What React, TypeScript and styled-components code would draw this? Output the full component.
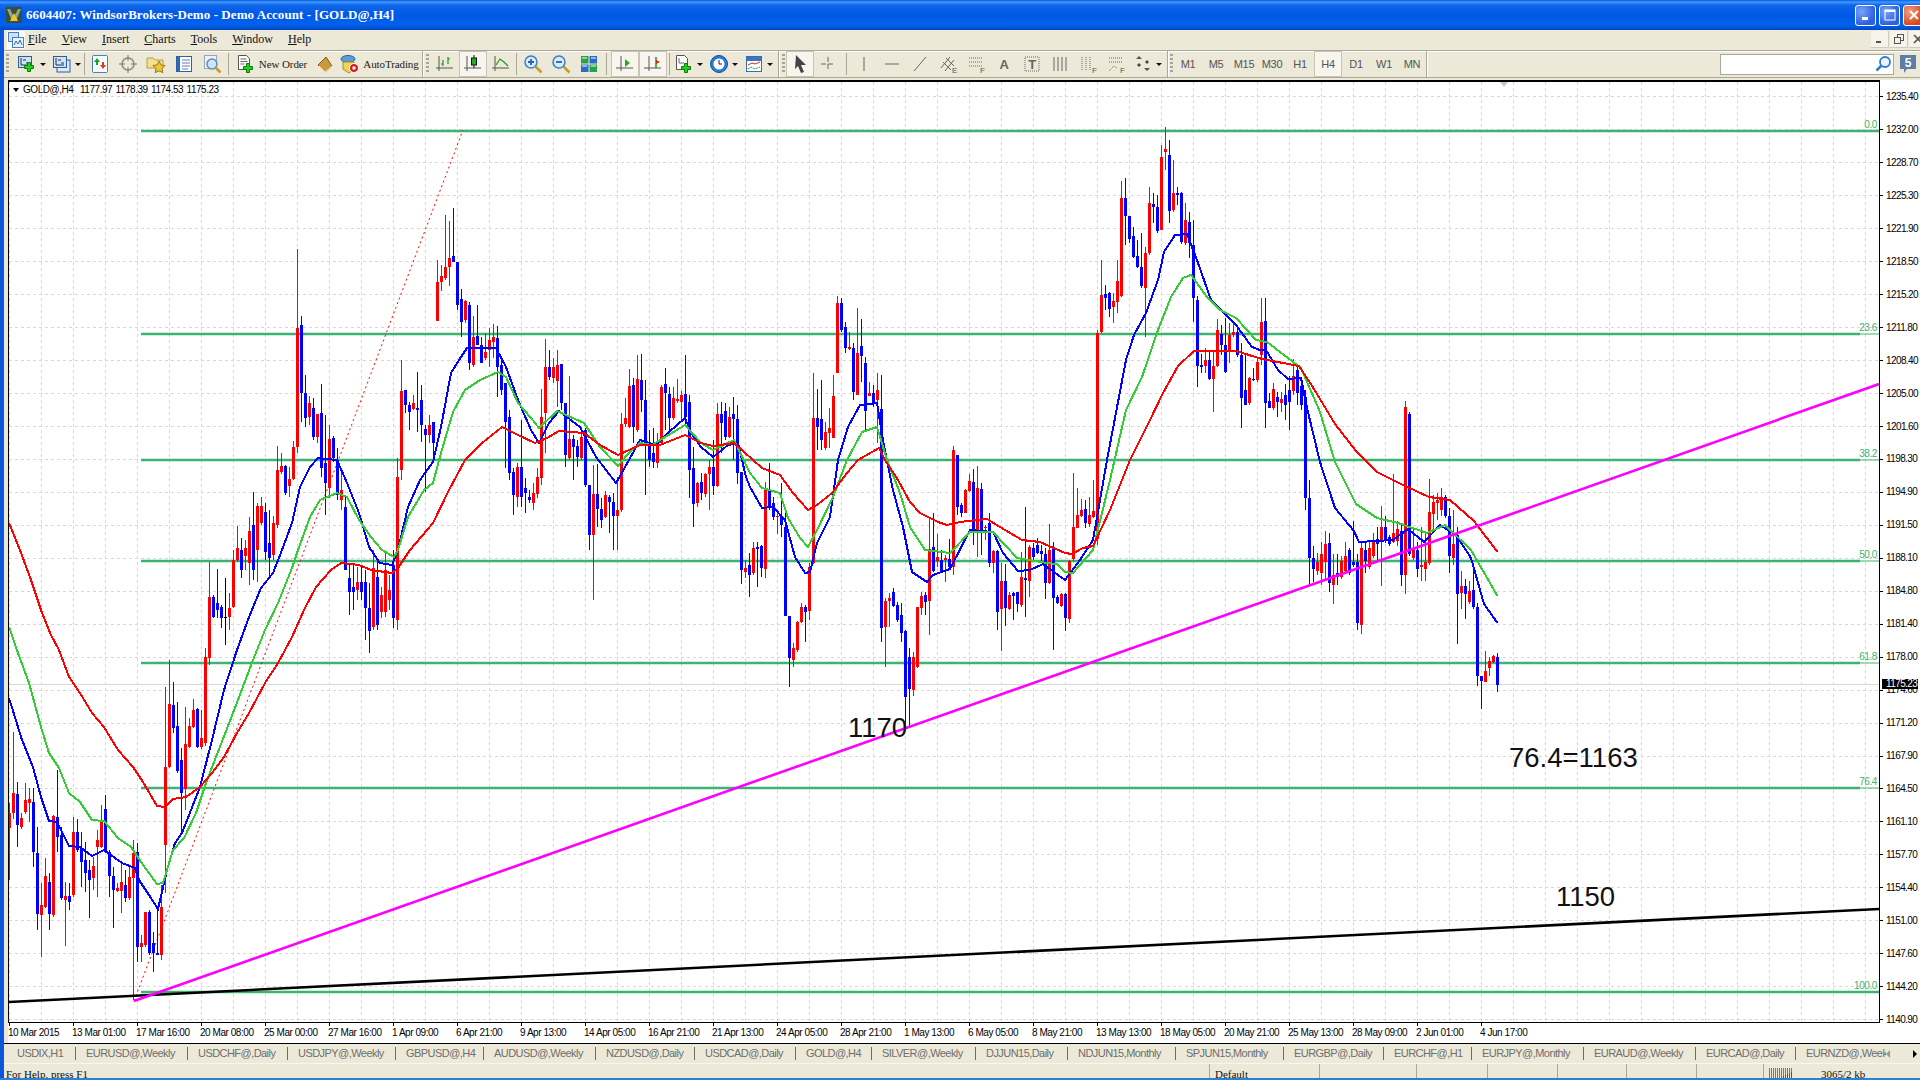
import React from "react";
import styled, { createGlobalStyle } from "styled-components";

const GlobalStyle = createGlobalStyle`
	html, body { margin: 0; height: 100%; overflow: hidden; background: #ece9d8; }
	#root { height: 100%; }
	* { box-sizing: border-box; }
`;

// all chart data is in page pixels, the svg viewBox starts where the chart starts
const BX0 = 9.5;
const BARS: number[][] = [
	// x, high, bodyTop, bodyBottom, low, 0 red / 1 blue / 2 black
	[9.5,803,813,828,880,0],[13.5,732,793,813,819,0],[17.5,782,794,825,847,1],[21.5,813,818,827,829,0],[25.5,783,800,812,814,0],[29.5,788,799,803,822,0],
	[33.5,788,802,852,867,1],[37.5,827,853,914,930,1],[41.5,883,905,915,957,0],[45.5,858,876,907,908,0],[49.5,873,882,914,930,1],[53.5,815,816,915,917,0],
	[57.5,770,817,837,852,1],[61.5,827,835,898,900,1],[65.5,882,896,900,946,0],[69.5,883,896,902,910,1],[73.5,817,832,895,897,0],[77.5,819,832,850,852,1],
	[81.5,832,848,862,887,1],[85.5,842,860,873,892,1],[89.5,860,870,880,918,1],[93.5,857,866,878,890,0],[97.5,830,840,847,897,0],[101.5,805,820,847,848,0],
	[105.5,795,809,852,853,1],[109.5,850,852,876,897,1],[113.5,867,876,890,928,1],[117.5,883,888,891,892,0],[121.5,863,882,891,913,0],[125.5,870,885,898,902,1],
	[129.5,867,877,898,900,0],[133.5,840,853,878,1000,0],[137.5,843,852,947,962,1],[141.5,935,943,947,962,0],[145.5,912,912,945,947,0],[149.5,910,912,953,955,1],
	[153.5,932,943,953,972,1],[157.5,907,953,955,955,1],[161.5,885,907,955,960,0],[165.5,687,767,845,893,0],[169.5,660,704,767,768,0],[173.5,682,705,728,733,1],
	[177.5,702,726,771,773,1],[181.5,748,760,793,833,1],[185.5,707,744,789,810,0],[189.5,718,726,747,748,0],[193.5,699,710,727,728,0],[197.5,708,709,747,748,1],
	[201.5,710,738,747,749,0],[205.5,648,657,743,746,0],[209.5,562,597,658,665,0],[213.5,595,597,617,618,1],[217.5,569,603,610,618,1],[221.5,605,607,618,628,1],
	[225.5,578,617,618,645,2],[229.5,593,608,617,630,0],[233.5,550,560,607,608,0],[237.5,526,548,560,562,0],[241.5,538,550,570,578,1],[245.5,540,548,556,570,0],
	[249.5,517,531,563,585,0],[253.5,492,525,570,580,1],[257.5,503,506,550,582,0],[261.5,497,506,523,525,0],[265.5,503,512,552,560,1],[269.5,510,543,558,578,1],
	[273.5,516,523,555,560,0],[277.5,446,470,525,528,0],[281.5,453,466,472,474,0],[285.5,465,466,493,495,1],[289.5,467,479,486,497,0],[293.5,441,447,479,480,0],
	[297.5,249,328,447,453,0],[301.5,316,325,393,422,1],[305.5,375,393,418,427,1],[309.5,396,403,417,425,0],[313.5,398,408,437,440,1],[317.5,414,414,437,443,0],
	[321.5,384,413,468,477,1],[325.5,415,463,483,515,1],[329.5,425,439,488,498,0],[333.5,436,438,458,462,1],[337.5,448,460,495,500,1],[341.5,470,490,500,510,0],
	[345.5,495,507,570,570,1],[349.5,565,578,592,615,1],[353.5,565,587,592,610,1],[357.5,567,582,590,600,0],[361.5,565,582,592,600,1],[365.5,570,582,608,640,1],
	[369.5,583,608,631,653,1],[373.5,550,568,627,630,0],[377.5,560,577,625,630,1],[381.5,587,595,612,618,0],[385.5,553,570,612,617,0],[389.5,575,590,600,610,0],
	[393.5,550,565,618,628,1],[397.5,458,477,620,630,0],[401.5,360,391,470,480,0],[405.5,390,390,405,413,1],[409.5,402,405,412,430,1],[413.5,395,403,409,410,0],
	[417.5,372,408,410,432,1],[421.5,385,400,425,442,1],[425.5,425,429,435,492,1],[429.5,415,425,435,443,0],[433.5,422,422,443,463,1],
	[437.5,260,282,321,321,0],[441.5,265,276,282,291,0],[445.5,215,267,278,280,0],[449.5,221,258,267,286,0],[453.5,208,256,262,262,1],[457.5,262,262,305,310,1],
	[461.5,289,299,322,337,1],[465.5,300,301,320,323,0],[469.5,302,305,363,370,1],[473.5,316,337,365,367,0],[477.5,305,336,345,345,1],[481.5,337,345,363,363,1],
	[485.5,333,352,358,360,0],[489.5,328,340,350,367,0],[493.5,324,337,342,358,0],[497.5,326,338,367,397,1],[501.5,357,365,390,395,1],[505.5,383,383,422,468,1],
	[509.5,410,417,473,480,1],[513.5,468,472,495,515,1],[517.5,463,467,497,507,0],[521.5,420,467,497,507,1],[525.5,478,488,493,513,1],[529.5,490,497,500,503,1],
	[533.5,483,493,503,510,0],[537.5,468,477,494,498,0],[541.5,389,417,478,485,0],[545.5,339,367,413,453,0],[549.5,350,367,377,380,1],[553.5,358,367,378,383,0],
	[557.5,350,365,381,407,0],[561.5,364,364,403,410,1],[565.5,403,403,455,467,1],[569.5,376,439,458,460,0],[573.5,435,439,447,480,1],[577.5,440,446,457,467,1],
	[581.5,427,437,458,460,0],[585.5,428,430,485,487,1],[589.5,485,485,535,550,1],[593.5,465,494,535,600,0],[597.5,464,494,509,527,1],[601.5,498,509,520,528,1],
	[605.5,491,495,517,518,0],[609.5,495,497,502,533,1],[613.5,493,502,516,550,1],[617.5,477,510,516,550,0],[621.5,413,424,510,512,0],[625.5,398,418,424,427,0],
	[629.5,369,386,427,428,0],[633.5,378,385,427,443,1],[637.5,355,379,430,432,0],
	[641.5,354,380,400,412,1],[645.5,380,400,443,495,1],[649.5,430,443,460,467,1],[653.5,428,453,462,468,1],[657.5,433,442,463,468,0],[661.5,385,387,443,445,0],
	[665.5,368,384,393,430,1],[669.5,387,394,418,430,1],[673.5,387,398,418,420,0],[677.5,379,399,401,403,0],[681.5,391,395,402,420,0],[685.5,355,394,417,427,1],
	[689.5,395,402,470,498,1],[693.5,447,468,504,527,1],[697.5,482,483,503,507,0],[701.5,473,482,493,500,1],[705.5,473,474,494,497,0],[709.5,460,467,474,510,0],
	[713.5,440,467,486,495,1],[717.5,403,414,486,487,0],[721.5,402,414,423,453,1],[725.5,403,411,437,440,1],[729.5,407,417,437,438,0],[733.5,397,414,419,460,1],
	[737.5,405,419,473,484,1],[741.5,472,472,570,584,1],[745.5,560,568,572,578,0],[749.5,553,565,575,597,1],[753.5,542,548,573,575,0],[757.5,542,547,549,587,1],
	[761.5,545,546,568,577,1],[765.5,482,490,569,578,0],[769.5,463,490,506,510,1],[773.5,497,503,517,520,1],[777.5,510,516,517,534,0],[781.5,483,517,525,537,1],
	[785.5,510,527,616,616,1],[789.5,616,616,658,687,1],[793.5,643,648,660,667,0],[797.5,621,622,650,652,0],[801.5,603,607,622,623,0],[805.5,605,607,612,642,1],
	[809.5,563,567,611,620,0],[813.5,373,418,563,564,0],[817.5,389,418,427,450,1],[821.5,380,419,440,450,1],[825.5,422,432,448,450,0],[829.5,408,428,433,448,0],
	[833.5,375,396,438,438,0],[837.5,296,303,373,373,0],[841.5,298,303,330,332,1],[845.5,322,327,348,353,1],[849.5,332,347,349,350,0],[853.5,343,348,392,400,1],
	[857.5,308,353,395,395,0],[861.5,319,346,356,382,1],[865.5,357,363,411,430,1],[869.5,382,393,396,396,0],[873.5,385,393,403,407,1],[877.5,373,390,400,443,0],
	[881.5,375,409,628,642,1],[885.5,598,601,627,667,0],[889.5,593,598,601,627,0],[893.5,588,592,606,607,1],[897.5,602,605,620,622,1],[901.5,603,615,633,642,1],
	[905.5,630,631,697,727,1],[909.5,648,657,689,728,1],[913.5,652,657,690,696,0],[917.5,607,607,667,668,0],[921.5,592,596,608,615,0],[925.5,592,595,602,615,1],
	[929.5,519,549,601,635,0],[933.5,513,547,571,572,1],[937.5,534,557,561,567,0],[941.5,550,560,571,572,1],[945.5,555,558,560,582,0],[949.5,539,559,567,570,1],
	[953.5,446,450,567,575,0],[957.5,455,455,507,515,1],[961.5,503,505,513,517,1],[965.5,489,490,513,513,0],[969.5,474,481,491,492,0],[973.5,469,482,532,545,1],
	[977.5,466,488,532,557,0],[981.5,483,489,531,555,1],[985.5,525,527,528,540,0],[989.5,513,523,563,567,1],[993.5,550,551,563,573,0],[997.5,550,551,612,630,1],
	[1001.5,563,581,609,651,0],[1005.5,564,581,608,626,1],[1009.5,592,595,609,610,0],[1013.5,592,593,596,620,1],[1017.5,592,592,604,612,1],[1021.5,552,577,605,607,0],
	[1025.5,507,578,580,617,1],[1029.5,545,547,581,597,0],[1033.5,543,548,557,562,1],[1037.5,538,545,553,554,1],[1041.5,545,551,554,563,1],[1045.5,548,554,583,599,1],
	[1049.5,524,550,583,584,0],[1053.5,542,549,598,650,1],[1057.5,595,597,603,604,1],[1061.5,593,594,606,607,0],[1065.5,593,594,618,631,1],[1069.5,560,561,619,623,0],
	[1073.5,473,527,559,561,0],[1077.5,488,515,528,528,0],[1081.5,499,510,516,517,0],[1085.5,500,509,523,528,1],[1089.5,497,515,524,527,0],[1093.5,480,511,517,518,0],
	[1097.5,330,333,539,545,0],[1101.5,260,295,332,333,0],[1105.5,285,294,298,310,1],[1109.5,292,293,309,317,1],[1113.5,293,301,307,323,0],[1117.5,260,281,302,313,0],
	[1121.5,181,198,296,297,0],[1125.5,178,198,216,245,1],[1129.5,216,216,239,243,1],[1133.5,227,236,257,258,1],[1137.5,240,256,267,268,1],[1141.5,233,267,286,288,1],
	[1145.5,247,253,288,337,0],[1149.5,187,203,253,255,0],[1153.5,193,204,207,223,1],[1157.5,195,207,231,233,1],[1161.5,145,157,230,230,0],[1165.5,127,149,152,170,0],
	[1169.5,140,155,211,223,1],[1173.5,160,193,210,212,0],[1177.5,187,193,195,205,1],[1181.5,192,193,242,244,1],[1185.5,203,220,243,245,0],[1189.5,212,222,243,258,1],
	[1193.5,220,245,298,322,1],[1197.5,296,300,366,387,1],[1201.5,354,365,367,373,1],[1205.5,348,360,366,373,0],[1209.5,352,360,379,380,1],[1213.5,352,366,379,412,0],
	[1217.5,319,330,366,367,0],[1221.5,325,334,345,355,1],[1225.5,318,345,372,373,1],[1229.5,323,335,350,363,0],[1233.5,322,332,335,337,0],[1237.5,328,332,355,357,1],
	[1241.5,343,355,398,428,1],[1245.5,355,390,405,405,1],[1249.5,377,378,403,405,0],[1253.5,368,379,380,381,1],[1257.5,358,362,380,382,0],[1261.5,298,322,355,365,0],
	[1265.5,298,321,403,428,1],[1269.5,393,401,408,408,1],[1273.5,383,389,408,410,0],[1277.5,392,397,402,417,1],[1281.5,392,399,403,412,0],[1285.5,384,395,405,420,1],
	[1289.5,376,390,402,430,1],[1293.5,359,376,391,395,0],[1297.5,366,370,393,405,1],[1301.5,378,386,405,410,1],[1305.5,390,397,498,510,1],[1309.5,480,498,558,585,1],
	[1313.5,546,558,569,582,1],[1317.5,553,562,571,575,0],[1321.5,542,554,573,585,0],[1325.5,531,544,562,581,0],[1329.5,533,543,583,592,1],[1333.5,554,575,585,604,0],
	[1337.5,554,573,577,585,1],[1341.5,556,561,577,579,0],[1345.5,542,556,571,573,0],[1349.5,548,550,573,575,1],[1353.5,521,562,565,567,1],[1357.5,554,562,623,630,1],
	[1361.5,542,548,625,634,0],[1365.5,542,550,561,573,1],[1369.5,540,548,567,569,0],[1373.5,533,541,556,558,0],[1377.5,527,539,544,562,1],[1381.5,506,527,542,586,0],
	[1385.5,516,527,541,543,1],[1389.5,535,537,544,546,1],[1393.5,474,533,542,543,0],[1397.5,521,529,541,546,0],[1401.5,523,531,575,586,1],[1405.5,401,407,575,594,0],
	[1409.5,412,414,554,556,1],[1413.5,527,548,558,560,0],[1417.5,542,550,569,577,1],[1421.5,527,565,567,581,0],[1425.5,531,562,569,581,0],[1429.5,479,512,563,565,0],
	[1433.5,495,502,514,531,0],[1437.5,493,500,503,520,0],[1441.5,488,497,510,516,0],[1445.5,495,497,516,518,1],[1449.5,508,516,556,573,1],[1453.5,510,544,558,565,0],
	[1457.5,527,535,594,644,1],[1461.5,571,586,593,609,0],[1465.5,579,586,594,619,1],[1469.5,581,591,602,604,0],[1473.5,565,590,607,609,1],[1477.5,603,607,676,686,1],
	[1481.5,676,676,681,709,1],[1485.5,651,671,682,682,0],[1489.5,657,661,668,676,0],[1493.5,655,656,662,663,0],[1497.5,653,657,685,692,1],
];

const RED_MA = "9,523 20,550 31,580 41,610 51,635 59,650 69,677 80,693 92,713 104,727 118,750 133,767 143,782 157,806 165,807 173,799 186,797 200,787 212,773 224,757 237,733 249,713 265,683 278,663 292,637 304,610 316,587 331,570 341,563 359,565 371,570 392,573 398,568 410,550 433,523 449,490 465,460 482,443 502,427 518,435 535,443 547,438 559,431 584,433 600,445 618,455 640,445 660,445 685,435 701,443 713,446 734,443 753,460 762,468 780,475 793,493 808,510 817,505 832,493 847,473 858,460 879,448 885,460 898,480 910,502 920,513 938,522 947,525 960,522 987,519 1000,527 1022,540 1040,542 1065,553 1072,554 1083,548 1093,546 1110,510 1130,460 1150,420 1163,393 1178,366 1194,351 1236,351 1262,359 1299,366 1314,389 1335,424 1356,451 1377,472 1403,485 1429,497 1450,500 1474,521 1497.5,552";
const GREEN_MA = "9,627 18,653 29,683 41,727 49,753 59,768 69,793 80,802 92,820 104,821 118,838 131,847 141,862 157,884 163,883 173,850 184,838 196,813 206,783 216,757 233,713 253,660 265,630 278,603 292,568 298,550 310,517 320,500 337,493 347,497 359,520 371,537 382,550 394,557 398,550 408,517 424,490 433,483 441,453 453,412 465,390 480,380 498,372 506,377 518,403 531,418 539,428 557,411 584,423 600,447 618,466 627,455 640,443 652,445 685,425 701,443 713,450 734,440 750,473 762,488 780,493 788,518 800,538 808,547 817,530 833,497 847,460 862,432 877,427 887,460 900,493 910,527 925,550 950,553 970,532 993,532 1017,558 1047,563 1057,564 1065,572 1073,573 1093,550 1110,480 1126,410 1142,377 1158,330 1171,297 1183,278 1191,275 1207,297 1220,310 1236,318 1256,340 1267,342 1301,368 1320,412 1335,462 1356,504 1377,518 1398,523 1427,533 1445,525 1471,550 1497.5,596";
const BLUE_MA = "9,698 22,740 33,767 41,797 49,821 57,822 69,846 80,847 92,856 104,850 122,863 135,868 139,880 149,895 158,909 167,870 175,843 182,833 200,787 212,740 224,690 237,650 249,617 261,588 273,573 282,550 292,523 300,487 310,467 318,458 337,460 347,483 359,513 369,547 380,563 392,565 398,550 408,507 420,480 433,462 441,427 451,373 461,357 467,348 496,348 506,367 518,400 531,430 539,443 549,423 559,411 580,427 596,457 616,483 629,460 640,440 656,445 669,432 685,418 691,433 701,447 713,457 728,445 738,443 746,477 750,487 762,508 773,507 785,520 795,557 805,573 810,572 817,543 830,517 838,460 848,427 860,405 877,403 883,440 893,490 903,527 912,572 927,582 933,575 950,569 970,530 993,532 1003,553 1018,571 1030,570 1043,564 1065,580 1080,560 1093,540 1107,460 1126,360 1134,335 1146,313 1158,280 1164,252 1175,235 1187,234 1197,260 1211,300 1224,313 1236,325 1252,347 1260,350 1266,350 1278,370 1288,379 1301,378 1307,408 1320,462 1335,508 1354,531 1359,542 1393,540 1408,529 1424,542 1440,525 1456,535 1471,558 1484,604 1497.5,623";

const FIBS = [
	{ y: 131, label: "0.0", thin: false },
	{ y: 334, label: "23.6", thin: true },
	{ y: 460, label: "38.2", thin: true },
	{ y: 561, label: "50.0", thin: true },
	{ y: 663, label: "61.8", thin: true },
	{ y: 788, label: "76.4", thin: true },
	{ y: 992, label: "100.0", thin: false },
];

const PRICES = ["1235.40","1232.00","1228.70","1225.30","1221.90","1218.50","1215.20","1211.80","1208.40","1205.00","1201.60","1198.30","1194.90","1191.50","1188.10","1184.80","1181.40","1178.00","1174.60","1171.20","1167.90","1164.50","1161.10","1157.70","1154.40","1151.00","1147.60","1144.20","1140.90"];
const TIMES = ["10 Mar 2015","13 Mar 01:00","17 Mar 16:00","20 Mar 08:00","25 Mar 00:00","27 Mar 16:00","1 Apr 09:00","6 Apr 21:00","9 Apr 13:00","14 Apr 05:00","16 Apr 21:00","21 Apr 13:00","24 Apr 05:00","28 Apr 21:00","1 May 13:00","6 May 05:00","8 May 21:00","13 May 13:00","18 May 05:00","20 May 21:00","25 May 13:00","28 May 09:00","2 Jun 01:00","4 Jun 17:00"];
const TABS: [string, number][] = [["USDIX,H1",72],["EURUSD@,Weekly",112],["USDCHF@,Daily",100],["USDJPY@,Weekly",108],["GBPUSD@,H4",88],["AUDUSD@,Weekly",112],["NZDUSD@,Daily",99],["USDCAD@,Daily",101],["GOLD@,H4",76],["SILVER@,Weekly",104],["DJJUN15,Daily",92],["NDJUN15,Monthly",108],["SPJUN15,Monthly",108],["EURGBP@,Daily",100],["EURCHF@,H1",88],["EURJPY@,Monthly",112],["EURAUD@,Weekly",112],["EURCAD@,Daily",100]];
const MENUS = ["File","View","Insert","Charts","Tools","Window","Help"];
const PERIODS = ["M1","M5","M15","M30","H1","H4","D1","W1","MN"];

const Window = styled.div`
	width: 1920px;
	height: 1080px;
	display: flex;
	flex-direction: column;
	overflow: hidden;
	background: #ece9d8;
	font-family: "Liberation Sans", Arial, sans-serif;
`;

const TitleBar = styled.div`
	height: 30px;
	flex: none;
	display: flex;
	align-items: center;
	padding-left: 6px;
	gap: 4px;
	background: linear-gradient(180deg, #0a5ce0 0, #3f98ff 7%, #0f66ea 17%, #0058e6 50%, #0062ee 82%, #0048c4 100%);
`;

const TitleText = styled.span`
	font-family: "Liberation Serif", serif;
	font-weight: 700;
	font-size: 13px;
	letter-spacing: 0.07px;
	color: #fff;
`;

const WinButtons = styled.div`
	margin-left: auto;
	display: flex;
	gap: 3px;
	width: 65px;
`;

const WinButton = styled.div<{ $close?: boolean }>`
	width: 21px;
	height: 21px;
	flex: none;
	border: 1px solid #fff;
	border-radius: 3px;
	display: flex;
	align-items: center;
	justify-content: center;
	background: ${(p) => (p.$close ? "radial-gradient(circle at 30% 30%, #f0a080, #d8481e 70%)" : "radial-gradient(circle at 30% 30%, #7aa4f6, #2c60e0 70%)")};
`;

const Frame = styled.div`
	flex: 1;
	min-height: 0;
	display: flex;
	flex-direction: column;
	border-left: 4px solid #0a57dc;
`;

const MenuBar = styled.div`
	height: 20px;
	flex: none;
	display: flex;
	align-items: center;
	padding: 0 0 1px 3px;
	font-family: "Liberation Serif", serif;
	font-size: 12px;
	color: #111;
`;

const MenuIcon = styled.div`
	width: 18px;
	height: 18px;
	background: #fbfbf8;
	display: flex;
	align-items: center;
	justify-content: center;
`;

const MenuItem = styled.span`
	padding: 0 8px 0 3px;
	margin-right: 4px;
	&::first-letter { text-decoration: underline; }
`;

const MdiButtons = styled.div`
	margin-left: auto;
	display: flex;
	gap: 1px;
	width: 49px;
`;

const MdiButton = styled.div`
	width: 18px;
	height: 17px;
	flex: none;
	background: #f6f4ea;
	border-right: 1px solid #cfcbb8;
	border-bottom: 1px solid #cfcbb8;
	display: flex;
	align-items: center;
	justify-content: center;
`;

const ToolRow = styled.div`
	height: 28px;
	flex: none;
	display: flex;
	align-items: center;
	border-top: 1px solid #aca899;
	border-bottom: 1px solid #aca899;
	box-shadow: inset 0 1px 0 #fff;
`;

const ToolGroup = styled.div<{ $w: number }>`
	width: ${(p) => p.$w}px;
	height: 26px;
	flex: none;
	display: flex;
	align-items: center;
	border-right: 1px solid #aca899;
	box-shadow: 1px 0 0 #fff;
`;

const Grip = styled.div<{ $l: number; $r: number }>`
	width: 4px;
	height: 20px;
	flex: none;
	margin: 0 ${(p) => p.$r}px 0 ${(p) => p.$l}px;
	background: repeating-linear-gradient(180deg, #a8a492 0 2px, transparent 2px 4px);
	background-size: 3px 100%;
	background-repeat: no-repeat;
`;

const Sep = styled.div<{ $l: number; $r: number }>`
	width: 1px;
	height: 22px;
	flex: none;
	background: #aca899;
	margin: 0 ${(p) => p.$r}px 0 ${(p) => p.$l}px;
`;

const ToolButton = styled.div<{ $w?: number; $on?: boolean }>`
	width: ${(p) => p.$w ?? 28}px;
	height: 26px;
	flex: none;
	display: flex;
	align-items: center;
	justify-content: center;
	gap: 3px;
	color: #555;
	font-size: 11px;
	letter-spacing: -0.3px;
	border: 1px solid ${(p) => (p.$on ? "#c8c5b4" : "transparent")};
	background: ${(p) => (p.$on ? "#f7f5ee" : "transparent")};
`;

const TextLabel = styled.span`
	font-family: "Liberation Serif", serif;
	font-size: 11px;
	letter-spacing: -0.1px;
	color: #222;
	white-space: nowrap;
`;

const Caret = styled.span`
	width: 0;
	height: 0;
	flex: none;
	border-left: 3px solid transparent;
	border-right: 3px solid transparent;
	border-top: 3px solid #111;
`;

const SearchWrap = styled.div`
	margin-left: auto;
	display: flex;
	align-items: center;
	gap: 5px;
	padding-right: 3px;
`;

const SearchBox = styled.div`
	width: 174px;
	height: 21px;
	background: #fff;
	border: 1px solid #aca899;
	display: flex;
	align-items: center;
	justify-content: flex-end;
	padding-right: 1px;
`;

const ChartArea = styled.div`
	flex: none;
	height: 965px;
	padding: 2px 0 0 4px;
	display: grid;
	grid-template-columns: 1872px 1fr;
	grid-template-rows: 943px 20px;
`;

const Chart = styled.div`
	position: relative;
	background: #fff;
	border: 1px solid #000;
	border-top-width: 2px;
	svg { display: block; }
`;

const ChartLabel = styled.div`
	position: absolute;
	left: 4px;
	top: 2px;
	display: flex;
	align-items: center;
	gap: 4px;
	font-size: 10px;
	letter-spacing: -0.46px;
	word-spacing: 1px;
	color: #000;
	white-space: pre;
`;

const DownTri = styled.span`
	width: 0;
	height: 0;
	border-left: 3px solid transparent;
	border-right: 3px solid transparent;
	border-top: 4px solid #000;
`;

const ShiftMark = styled.span`
	position: absolute;
	left: 1491px;
	top: 0;
	width: 0;
	height: 0;
	border-left: 4px solid transparent;
	border-right: 4px solid transparent;
	border-top: 5px solid #c8c8c8;
`;

const PriceAxis = styled.div`
	grid-row: 1 / 3;
	grid-column: 2;
	position: relative;
	background: #fff;
	overflow: hidden;
`;

const PriceRow = styled.div`
	height: 32.96px;
	display: flex;
	align-items: center;
	padding-left: 6px;
	position: relative;
	font-size: 10px;
	letter-spacing: -0.6px;
	color: #000;
	&::before {
		content: "";
		position: absolute;
		left: 0;
		top: 50%;
		width: 3px;
		height: 1px;
		background: #000;
	}
`;

const BidTag = styled.div`
	position: absolute;
	left: 2px;
	top: 599px;
	width: 36px;
	height: 10px;
	background: #000;
	color: #fff;
	font-size: 10px;
	line-height: 10px;
	letter-spacing: -0.6px;
	padding-left: 4px;
`;

const TimeAxis = styled.div`
	grid-column: 1;
	background: #fff;
	display: flex;
	overflow: hidden;
`;

const TimeCell = styled.div`
	width: 64px;
	flex: none;
	position: relative;
	padding-top: 4px;
	font-size: 10px;
	line-height: 12px;
	letter-spacing: -0.45px;
	white-space: nowrap;
	color: #000;
	&::before {
		content: "";
		position: absolute;
		left: 1px;
		top: 0;
		width: 1px;
		height: 3px;
		background: #000;
	}
`;

const TabBar = styled.div`
	height: 20px;
	flex: none;
	display: flex;
	align-items: center;
	position: relative;
	border-top: 1px solid #000;
	overflow: hidden;
`;

const Tab = styled.div<{ $w?: number; $first?: boolean }>`
	width: ${(p) => (p.$w ? `${p.$w}px` : "auto")};
	flex: none;
	height: 13px;
	line-height: 13px;
	padding-left: ${(p) => (p.$first ? 13 : 10)}px;
	font-size: 11px;
	letter-spacing: -0.55px;
	color: #6e6e6e;
	white-space: nowrap;
	border-right: ${(p) => (p.$w ? "1px solid #706c60" : "none")};
`;

const TabArrows = styled.div`
	position: absolute;
	right: 0;
	top: 0;
	height: 100%;
	width: 34px;
	display: flex;
	align-items: center;
	justify-content: space-between;
	padding-right: 3px;
	background: #ece9d8;
`;

const Arrow = styled.span<{ $dir: "l" | "r"; $c: string }>`
	width: 0;
	height: 0;
	border-top: 4px solid transparent;
	border-bottom: 4px solid transparent;
	${(p) => (p.$dir === "l" ? `border-right: 4px solid ${p.$c};` : `border-left: 4px solid ${p.$c};`)}
`;

const StatusBar = styled.div`
	height: 15px;
	flex: none;
	display: flex;
	overflow: hidden;
	border-top: 1px solid #f7f6ef;
	font-family: "Liberation Serif", serif;
	font-size: 11px;
	line-height: 15px;
	color: #111;
`;

const StatusCell = styled.div<{ $w: number; $first?: boolean }>`
	width: ${(p) => p.$w}px;
	flex: none;
	padding: 3px 0 0 ${(p) => (p.$first ? 2 : 5)}px;
	border-left: ${(p) => (p.$first ? "none" : "1px solid #aca899")};
	white-space: nowrap;
	display: flex;
	align-items: flex-start;
	gap: 28px;
`;

const BottomEdge = styled.div`
	height: 2px;
	flex: none;
	margin-left: -4px;
	background: #2f7fd8;
`;

const Stroke = styled.svg.attrs({ viewBox: "0 0 20 20", width: 20, height: 20 })`
	flex: none;
	display: block;
`;

const ChartPlus = ({ double }: { double?: boolean }) => (
	<Stroke>
		{double && <rect x="5" y="6" width="13" height="12" fill="#dbe9fa" stroke="#2f5c9c" />}
		<rect x="1.5" y="2.5" width="13" height="11" fill="#cfe3f8" stroke="#2f5c9c" />
		<path d="M4 4v7h8M6 6h3M9 9h3" stroke="#234" fill="none" />
		{!double && <path d="M10.5 8.5h3v3h3v3h-3v3h-3v-3h-3v-3h3z" fill="#1fd11f" stroke="#0b7d0b" />}
	</Stroke>
);

const MarketIcon = () => (
	<Stroke>
		<rect x="2.5" y="1.5" width="15" height="17" rx="1" fill="#f4f8ff" stroke="#4a7fc0" />
		<path d="M7 4l3 4H8v3H6V8H4z" fill="#16a516" />
		<path d="M13 15l-3-4h2V8h2v3h2z" fill="#dd3a1a" />
	</Stroke>
);

const TargetIcon = () => (
	<Stroke>
		<circle cx="10" cy="10" r="6" fill="none" stroke="#8a8a8a" strokeWidth="1.5" />
		<path d="M10 1v6M10 13v6M1 10h6M13 10h6" stroke="#777" />
	</Stroke>
);

const FolderStar = () => (
	<Stroke>
		<path d="M1 4h6l2 2h8v8H1z" fill="#f6df8e" stroke="#b39a4e" />
		<path d="M13 7l2 4 4 .5-3 3 .8 4.2L13 16.8 9.2 18.7l.8-4.2-3-3 4-.5z" fill="#f2c832" stroke="#8f7a20" />
	</Stroke>
);

const TerminalIcon = () => (
	<Stroke>
		<rect x="2.5" y="2.5" width="15" height="15" fill="#fff" stroke="#2e5fa8" />
		<rect x="3" y="3" width="3" height="14" fill="#2e66b8" />
		<path d="M8 6h8M8 9h8M8 12h8M8 15h6" stroke="#5a7fb4" />
	</Stroke>
);

const TesterIcon = () => (
	<Stroke>
		<rect x="2.5" y="1.5" width="12" height="13" fill="#eef0f4" stroke="#9aa4b4" />
		<circle cx="10" cy="10" r="5" fill="#cfe6f8" stroke="#5e8cc0" strokeWidth="1.5" />
		<path d="M13.5 13.5l5 5" stroke="#c89a2a" strokeWidth="2.5" />
	</Stroke>
);

const OrderIcon = () => (
	<Stroke>
		<path d="M2.5 1.5h8l3 3v11h-11z" fill="#fff" stroke="#555" />
		<path d="M4.5 5h6M4.5 7.5h7M4.5 10h4" stroke="#666" />
		<path d="M10.5 9.5h3v3h3v3h-3v3h-3v-3h-3v-3h3z" fill="#1fd11f" stroke="#0b7d0b" />
	</Stroke>
);

const BookIcon = () => (
	<Stroke>
		<path d="M3 11L11 3l6 9-7 6z" fill="#c89a3a" stroke="#7a5a1a" />
		<path d="M4 12l6 6 7-6" fill="none" stroke="#f4e2b0" />
	</Stroke>
);

const AutoIcon = () => (
	<Stroke>
		<ellipse cx="8" cy="5" rx="7" ry="3.5" fill="#5a9bd8" stroke="#2e5f94" />
		<path d="M3 8h11v7l-5 4-6-4z" fill="#f2d35a" stroke="#a08a2a" />
		<circle cx="14" cy="14" r="4.5" fill="#d41a1a" stroke="#fff" />
		<rect x="12.5" y="12.5" width="3" height="3" fill="#fff" />
	</Stroke>
);

const BarsIcon = ({ kind }: { kind: "bar" | "candle" | "line" }) => (
	<Stroke>
		<path d="M4 2v15M1 14h17" stroke="#555" fill="none" />
		{kind === "bar" && <path d="M8 12V6M8 10H6M13 10V3M13 5h2" stroke="#1c9a1c" fill="none" strokeWidth="1.2" />}
		{kind === "candle" && <><path d="M11 1v13" stroke="#111" /><rect x="8.5" y="4" width="5" height="7" fill="#1fb01f" stroke="#111" /></>}
		{kind === "line" && <path d="M5 11l4-6 4 3 4 4" stroke="#1c9a1c" fill="none" strokeWidth="1.2" />}
	</Stroke>
);

const ZoomIcon = ({ plus }: { plus?: boolean }) => (
	<Stroke>
		<circle cx="8" cy="8" r="6" fill="#d6ecfb" stroke="#3f7cc4" strokeWidth="1.5" />
		<path d={plus ? "M5 8h6M8 5v6" : "M5 8h6"} stroke="#2a62b0" strokeWidth="1.8" />
		<path d="M12.5 12.5l6 6" stroke="#c89a2a" strokeWidth="2.5" />
	</Stroke>
);

const TileIcon = () => (
	<Stroke>
		<rect x="2" y="2" width="7.5" height="7.5" fill="#27a24a" />
		<rect x="10.5" y="2" width="7.5" height="7.5" fill="#2a6cc8" />
		<rect x="2" y="10.5" width="7.5" height="7.5" fill="#2a6cc8" />
		<rect x="10.5" y="10.5" width="7.5" height="7.5" fill="#27a24a" />
		<path d="M3 4h5M12 4h5M3 12h5M12 12h5" stroke="#fff" />
	</Stroke>
);

const ScrollIcon = ({ shift }: { shift?: boolean }) => (
	<Stroke>
		<path d="M6 2v15M1 14h17" stroke="#555" fill="none" />
		{shift ? <><path d="M13 3v11" stroke="#1c9a1c" strokeWidth="1.5" /><path d="M13 6l4 2-4 2z" fill="#c02a1a" /></> : <path d="M10 5l5 4-5 4z" fill="#1fb01f" />}
	</Stroke>
);

const NewIndicator = () => (
	<Stroke>
		<path d="M2.5 1.5h8l3 3v11h-11z" fill="#fff" stroke="#555" />
		<path d="M5 4v5h5" stroke="#666" fill="none" />
		<path d="M10.5 9.5h3v3h3v3h-3v3h-3v-3h-3v-3h3z" fill="#1fd11f" stroke="#0b7d0b" />
	</Stroke>
);

const ClockIcon = () => (
	<Stroke>
		<circle cx="10" cy="10" r="8.5" fill="#2a7ad8" stroke="#1a4f96" />
		<circle cx="10" cy="10" r="5.5" fill="#fff" />
		<path d="M10 6v4h3" stroke="#222" fill="none" />
	</Stroke>
);

const TemplateIcon = () => (
	<Stroke>
		<rect x="2.5" y="2.5" width="15" height="15" fill="#fff" stroke="#3a6cb0" />
		<rect x="3" y="3" width="14" height="4" fill="#3a74c4" />
		<path d="M4 11l4-2 3 1 5-2" stroke="#d02a1a" fill="none" />
		<path d="M4 15l3-2 4 2 5-2" stroke="#1c9a1c" fill="none" strokeDasharray="2 1" />
	</Stroke>
);

const CursorIcon = () => (
	<Stroke>
		<path d="M6 1l10 10h-5l3 7-3 1-3-7-3 3z" fill="#444" />
	</Stroke>
);

const DrawIcon = ({ d, dash, letter }: { d: string; dash?: string; letter?: string }) => (
	<Stroke>
		<path d={d} stroke="#666" fill="none" strokeDasharray={dash} />
		{letter && <text x="14" y="19" fontSize="8" fontFamily="Liberation Sans" fill="#555">{letter}</text>}
	</Stroke>
);

const TextIcon = ({ framed }: { framed?: boolean }) => (
	<Stroke>
		{framed && <rect x="3" y="3" width="14" height="14" fill="none" stroke="#666" strokeDasharray="1 1" />}
		<text x="10" y="15" fontSize="13" fontWeight="700" fontFamily="Liberation Sans" textAnchor="middle" fill="#666">{framed ? "T" : "A"}</text>
	</Stroke>
);

const ArrowsIcon = () => (
	<Stroke>
		<path d="M6 2l3 3H3zM14 17l-3-3h6z" fill="#555" />
		<path d="M6 9l2 2-2 2-2-2zM14 6l2 2-2 2-2-2z" fill="#444" />
	</Stroke>
);

const LensIcon = () => (
	<svg viewBox="0 0 18 18" width="18" height="18">
		<circle cx="11" cy="7" r="5" fill="#eaf4ff" stroke="#2e7ad0" strokeWidth="1.8" />
		<path d="M7.5 10.5l-5 5" stroke="#2e7ad0" strokeWidth="2.5" />
	</svg>
);

const ChatIcon = () => (
	<svg viewBox="0 0 18 20" width="18" height="20">
		<path d="M1 1h16v14H8l-3 4v-4H1z" fill="#5f7ea6" />
		<text x="9" y="13" fontSize="12" fontWeight="700" fontFamily="Liberation Sans" textAnchor="middle" fill="#fff">5</text>
	</svg>
);

const LogoIcon = () => (
	<svg viewBox="0 0 16 16" width="16" height="16">
		<rect width="16" height="16" fill="#3a4f3a" />
		<path d="M1 2h3l4 8 4-8h3l-5 12H6z" fill="#8fa58c" />
		<path d="M8 6l4 8H4z" fill="#e8c82c" />
	</svg>
);

const MenuGlyph = () => (
	<svg viewBox="0 0 16 16" width="16" height="16">
		<rect x="0.5" y="0.5" width="10" height="9" fill="#cfe3f8" stroke="#4a7fc0" />
		<rect x="4.5" y="5.5" width="11" height="10" fill="#e8f1fc" stroke="#4a7fc0" />
		<path d="M6 13l2-4 2 3 2-4 2 5" stroke="#2f6cb8" fill="none" />
	</svg>
);

const GridLines = () => (
	<g stroke="#d8d8d8" strokeDasharray="3 3" shapeRendering="crispEdges">
		{Array.from({ length: 59 }, (_, i) => <line key={i} x1={9.5 + 32 * i} x2={9.5 + 32 * i} y1={82} y2={1023} />)}
		{PRICES.map((_, i) => {
			const y = Math.round(96.3 + 32.96 * i) + 0.5;
			return <line key={i} x1={9} x2={1879} y1={y} y2={y} />;
		})}
	</g>
);

const Candles = () => (
	<g shapeRendering="crispEdges">
		{BARS.map(([x, hi, top, bot, lo, c]) => {
			const bx = BX0 + 4 * Math.round((x - BX0) / 4);
			const fill = c === 0 ? "#ff0000" : c === 1 ? "#0000ff" : "#000000";
			return (
				<g key={x} fill={fill}>
					<rect x={bx - 0.5} y={hi} width={1} height={lo - hi} />
					<rect x={bx - 1.5} y={top} width={3} height={Math.max(bot - top, 1)} />
				</g>
			);
		})}
	</g>
);

const FibText = styled.text`
	font-family: "Liberation Sans", sans-serif;
	font-size: 10px;
	letter-spacing: -0.4px;
	fill: #3cb371;
`;

const BigText = styled.text`
	font-family: "Liberation Sans", sans-serif;
	font-size: 27.5px;
	fill: #111;
`;

const ChartDrawing = () => (
	<svg viewBox="9 82 1870 941" width={1870} height={941}>
		<GridLines />
		<line x1={9} x2={1879} y1={684.5} y2={684.5} stroke="#d3dcd8" shapeRendering="crispEdges" />
		{FIBS.map((f) => (
			<g key={f.y} stroke="#3cb371">
				<line x1={141} x2={f.thin ? 1860 : 1879} y1={f.y} y2={f.y} strokeWidth={2.45} />
				{f.thin && <line x1={1860} x2={1879} y1={f.y} y2={f.y} strokeWidth={1} />}
			</g>
		))}
		{FIBS.map((f) => (
			<FibText key={f.label} x={1877} y={f.y - 3} textAnchor="end">{f.label}</FibText>
		))}
		<line x1={134} y1={1001} x2={463} y2={130} stroke="#ff0000" strokeDasharray="2 3" />
		<Candles />
		<g fill="none" strokeWidth={2} shapeRendering="crispEdges">
			<polyline points={BLUE_MA} stroke="#0000ff" />
			<polyline points={GREEN_MA} stroke="#32cd32" />
			<polyline points={RED_MA} stroke="#ff0000" />
		</g>
		<g strokeWidth={2.6}>
			<line x1={9} y1={1002} x2={1879} y2={909} stroke="#000000" />
			<line x1={134} y1={1001} x2={1879} y2={384} stroke="#ff00ff" />
		</g>
		<BigText x={848} y={737}>1170</BigText>
		<BigText x={1509} y={767}>76.4=1163</BigText>
		<BigText x={1556} y={906}>1150</BigText>
	</svg>
);

const drawing = [
	{ d: "M10 3v14" },
	{ d: "M3 10h14" },
	{ d: "M4 17L16 3" },
	{ d: "M3 14L12 3M7 17L16 6M5 8l8 8M8 4l8 8", letter: "E" },
	{ d: "M3 4h13M3 8h13M3 12h13", dash: "1 1", letter: "F" },
];

export default function App() {
	return (
		<Window>
			<GlobalStyle />
			<TitleBar>
				<LogoIcon />
				<TitleText>6604407: WindsorBrokers-Demo - Demo Account - [GOLD@,H4]</TitleText>
				<WinButtons>
					<WinButton>
						<svg viewBox="0 0 12 12" width="12" height="12"><rect x="2" y="8" width="6" height="3" fill="#fff" /></svg>
					</WinButton>
					<WinButton>
						<svg viewBox="0 0 12 12" width="12" height="12"><rect x="1" y="1" width="10" height="10" fill="none" stroke="#fff" /><rect x="1" y="1" width="10" height="2" fill="#fff" /></svg>
					</WinButton>
					<WinButton $close>
						<svg viewBox="0 0 12 12" width="12" height="12"><path d="M2 2l8 8M10 2l-8 8" stroke="#fff" strokeWidth="2" /></svg>
					</WinButton>
				</WinButtons>
			</TitleBar>
			<Frame>
				<MenuBar>
					<MenuIcon><MenuGlyph /></MenuIcon>
					{MENUS.map((m) => <MenuItem key={m}>{m}</MenuItem>)}
					<MdiButtons>
						<MdiButton><svg viewBox="0 0 10 10" width="10" height="10"><rect x="1" y="7" width="5" height="2" fill="#555" /></svg></MdiButton>
						<MdiButton><svg viewBox="0 0 10 10" width="10" height="10"><rect x="3.5" y="0.5" width="6" height="6" fill="none" stroke="#555" /><rect x="0.5" y="3.5" width="6" height="6" fill="#f6f4ea" stroke="#555" /></svg></MdiButton>
						<MdiButton><svg viewBox="0 0 10 10" width="10" height="10"><path d="M1 1l8 8M9 1l-8 8" stroke="#555" strokeWidth="1.6" /></svg></MdiButton>
					</MdiButtons>
				</MenuBar>
				<ToolRow>
					<ToolGroup $w={419}>
						<Grip $l={2} $r={4} />
						<ToolButton $w={35}><ChartPlus /><Caret /></ToolButton>
						<ToolButton $w={35}><ChartPlus double /><Caret /></ToolButton>
						<Sep $l={0} $r={1} />
						<ToolButton><MarketIcon /></ToolButton>
						<ToolButton><TargetIcon /></ToolButton>
						<ToolButton><FolderStar /></ToolButton>
						<ToolButton><TerminalIcon /></ToolButton>
						<ToolButton><TesterIcon /></ToolButton>
						<Sep $l={2} $r={3} />
						<ToolButton $w={79}><OrderIcon /><TextLabel>New Order</TextLabel></ToolButton>
						<ToolButton><BookIcon /></ToolButton>
						<ToolButton $w={81}><AutoIcon /><TextLabel>AutoTrading</TextLabel></ToolButton>
					</ToolGroup>
					<ToolGroup $w={356}>
						<Grip $l={3} $r={1} />
						<ToolButton><BarsIcon kind="bar" /></ToolButton>
						<ToolButton $on><BarsIcon kind="candle" /></ToolButton>
						<ToolButton><BarsIcon kind="line" /></ToolButton>
						<Sep $l={1} $r={2} />
						<ToolButton><ZoomIcon plus /></ToolButton>
						<ToolButton><ZoomIcon /></ToolButton>
						<ToolButton><TileIcon /></ToolButton>
						<Sep $l={3} $r={4} />
						<ToolButton $on><ScrollIcon /></ToolButton>
						<ToolButton $on><ScrollIcon shift /></ToolButton>
						<Sep $l={2} $r={1} />
						<ToolButton $w={35}><NewIndicator /><Caret /></ToolButton>
						<ToolButton $w={35}><ClockIcon /><Caret /></ToolButton>
						<ToolButton $w={35}><TemplateIcon /><Caret /></ToolButton>
					</ToolGroup>
					<ToolGroup $w={389}>
						<Grip $l={3} $r={0} />
						<ToolButton $on><CursorIcon /></ToolButton>
						<ToolButton><DrawIcon d="M10 3v14M3 10h14" dash="5 2" /></ToolButton>
						<Sep $l={4} $r={3} />
						{drawing.map((t) => <ToolButton key={t.d}><DrawIcon {...t} /></ToolButton>)}
						<ToolButton><TextIcon /></ToolButton>
						<ToolButton><TextIcon framed /></ToolButton>
						<ToolButton><DrawIcon d="M4 3v14M8 3v14M12 3v14M16 3v14" /></ToolButton>
						<ToolButton><DrawIcon d="M4 3v14M8 3v14M12 3v14" dash="1 1" letter="F" /></ToolButton>
						<ToolButton><DrawIcon d="M3 4h13M3 8h13M3 17l5-5 3 2" dash="1 1" letter="F" /></ToolButton>
						<ToolButton $w={35}><ArrowsIcon /><Caret /></ToolButton>
					</ToolGroup>
					<ToolGroup $w={259}>
						<Grip $l={2} $r={0} />
						{PERIODS.map((p) => <ToolButton key={p} $on={p === "H4"}>{p}</ToolButton>)}
					</ToolGroup>
					<SearchWrap>
						<SearchBox><LensIcon /></SearchBox>
						<ChatIcon />
					</SearchWrap>
				</ToolRow>
				<ChartArea>
					<Chart>
						<ChartDrawing />
						<ChartLabel><DownTri />GOLD@,H4  1177.97 1178.39 1174.53 1175.23</ChartLabel>
						<ShiftMark />
					</Chart>
					<PriceAxis>
						{PRICES.map((p) => <PriceRow key={p}>{p}</PriceRow>)}
						<BidTag>1175.23</BidTag>
					</PriceAxis>
					<TimeAxis>
						{TIMES.map((t) => <TimeCell key={t}>{t}</TimeCell>)}
					</TimeAxis>
				</ChartArea>
				<TabBar>
					{TABS.map(([name, w], i) => <Tab key={name} $w={w} $first={i === 0}>{name}</Tab>)}
					<Tab>EURNZD@,Weekly</Tab>
					<TabArrows>
						<Arrow $dir="l" $c="#999" />
						<Arrow $dir="r" $c="#000" />
					</TabArrows>
				</TabBar>
				<StatusBar>
					<StatusCell $w={1205} $first>For Help, press F1</StatusCell>
					<StatusCell $w={110}>Default</StatusCell>
					<StatusCell $w={97} />
					<StatusCell $w={71} />
					<StatusCell $w={70} />
					<StatusCell $w={69} />
					<StatusCell $w={70} />
					<StatusCell $w={67} />
					<StatusCell $w={157}>
						<svg viewBox="0 0 24 12" width="24" height="12">
							{Array.from({ length: 12 }, (_, i) => (
								<g key={i}>
									<rect x={i * 2} y={1} width={1} height={11} fill="#6f8f1a" />
									{i > 5 && <rect x={i * 2} y={12 - (i - 4)} width={1} height={i - 4} fill="#c0261a" />}
								</g>
							))}
						</svg>
						3065/2 kb
					</StatusCell>
				</StatusBar>
				<BottomEdge />
			</Frame>
		</Window>
	);
}
